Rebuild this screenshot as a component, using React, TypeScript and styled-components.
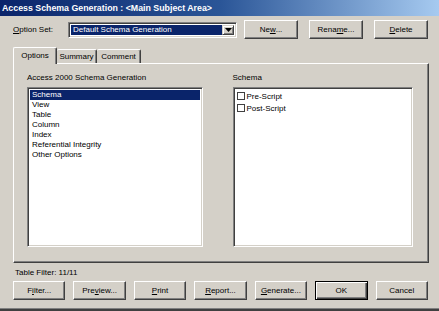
import React from "react";
import styled, { createGlobalStyle } from "styled-components";

const Global = createGlobalStyle`
  html, body { margin: 0; padding: 0; background: #d4d0c8; }
  body { font-family: "Liberation Sans", Arial, sans-serif; font-size: 8px; color: #000; }
  * { box-sizing: border-box; }
`;

const Window = styled.div`
  width: 439px;
  height: 311px;
  background: #d4d0c8;
  display: flex;
  flex-direction: column;
  border-bottom: 2px solid #404040;
  box-shadow: inset 0 -1px 0 #808080;
  overflow: hidden;
`;

const TitleBar = styled.div`
  height: 16px;
  flex: none;
  background: linear-gradient(to right, #0a246a 0%, #2a5597 50%, #a6caf0 100%);
  color: #fff;
  font-weight: bold;
  font-size: 8.8px;
  display: flex;
  align-items: center;
  padding-left: 2px;
  white-space: nowrap;
`;

const TopRow = styled.div`
  display: flex;
  align-items: center;
  margin-top: 4px;
  height: 19px;
  padding: 0 11px 0 13px;
  flex: none;
`;

const Label = styled.span`
  width: 55px;
  flex: none;
  white-space: nowrap;
`;

const U = styled.u`
  text-decoration: underline;
  text-underline-offset: 1px;
`;

const Combo = styled.div`
  width: 169px;
  height: 16px;
  flex: none;
  display: flex;
  background: #fff;
  border: 1px solid;
  border-color: #808080 #fff #fff #808080;
  box-shadow: inset 1px 1px 0 #404040, inset -1px -1px 0 #d4d0c8;
  padding: 2px;
  margin-right: 7px;
`;

const ComboText = styled.div`
  flex: 1;
  background: #0a246a;
  color: #fff;
  display: flex;
  align-items: center;
  padding-left: 2px;
  white-space: nowrap;
  overflow: hidden;
`;

const ComboArrow = styled.div`
  width: 12px;
  flex: none;
  background: #d4d0c8;
  border: 1px solid;
  border-color: #d4d0c8 #404040 #404040 #d4d0c8;
  box-shadow: inset 1px 1px 0 #fff, inset -1px -1px 0 #808080;
  display: flex;
  align-items: center;
  justify-content: center;
`;

const Button = styled.button<{ $w?: number; $default?: boolean }>`
  font: inherit;
  color: #000;
  width: ${(p) => (p.$w ? `${p.$w}px` : "auto")};
  flex: ${(p) => (p.$w ? "none" : "1")};
  height: 19px;
  padding: 0;
  background: #d4d0c8;
  border: 1px solid;
  border-color: ${(p) => (p.$default ? "#000" : "#fff #404040 #404040 #fff")};
  box-shadow: ${(p) =>
    p.$default
      ? "inset 1px 1px 0 #fff, inset -1px -1px 0 #404040, inset -2px -2px 0 #808080"
      : "inset -1px -1px 0 #808080"};
  display: flex;
  align-items: center;
  justify-content: center;
  white-space: nowrap;
`;

const TopButtons = styled.div`
  display: flex;
  gap: 11px;
`;

const Tabs = styled.div`
  margin: 8px 10px 0 13px;
  display: flex;
  flex-direction: column;
  flex: none;
`;

const TabStrip = styled.div`
  display: flex;
  align-items: flex-end;
  height: 16px;
  position: relative;
  z-index: 1;
`;

const Tab = styled.div<{ $active?: boolean; $w: number }>`
  width: ${(p) => p.$w}px;
  height: ${(p) => (p.$active ? 17 : 14)}px;
  margin-bottom: ${(p) => (p.$active ? -1 : 0)}px;
  background: #d4d0c8;
  border-top: 1px solid #fff;
  border-left: ${(p) => (p.$active ? "1px solid #fff" : "0")};
  border-right: 1px solid #404040;
  box-shadow: inset -1px 0 0 #808080;
  border-radius: 2px 2px 0 0;
  display: flex;
  align-items: center;
  justify-content: center;
  padding-bottom: ${(p) => (p.$active ? 2 : 0)}px;
`;

const Panel = styled.div`
  height: 200px;
  border: 1px solid;
  border-color: #fff #404040 #404040 #fff;
  box-shadow: inset -1px -1px 0 #808080;
  display: flex;
  padding: 8px 15px 15px 13px;
  gap: 30px;
`;

const Group = styled.div<{ $w: number }>`
  width: ${(p) => p.$w}px;
  display: flex;
  flex-direction: column;
`;

const GroupLabel = styled.div`
  height: 15px;
  line-height: 11px;
`;

const ListBox = styled.div`
  flex: 1;
  background: #fff;
  border: 1px solid;
  border-color: #808080 #fff #fff #808080;
  box-shadow: inset 1px 1px 0 #404040, inset -1px -1px 0 #d4d0c8;
  padding: 2px;
  display: flex;
  flex-direction: column;
`;

const Row = styled.div<{ $selected?: boolean }>`
  height: 10px;
  line-height: 10px;
  padding-left: 2px;
  background: ${(p) => (p.$selected ? "#0a246a" : "transparent")};
  color: ${(p) => (p.$selected ? "#fff" : "#000")};
  white-space: nowrap;
`;

const CheckRow = styled.div`
  height: 12px;
  display: flex;
  align-items: center;
  gap: 2px;
  padding-left: 1px;
  white-space: nowrap;
`;

const Check = styled.span`
  width: 8px;
  height: 8px;
  flex: none;
  border: 1px solid #404040;
  background: #fff;
`;

const Status = styled.div`
  margin: 5px 0 0 15px;
  height: 10px;
  line-height: 10px;
  flex: none;
`;

const BottomRow = styled.div`
  display: flex;
  gap: 8px;
  margin: 3px 11px 0 13px;
  flex: none;
`;

const Arrow = () => (
  <svg width="7" height="4" viewBox="0 0 7 4">
    <path d="M0 0h7L3.5 4z" fill="#000" />
  </svg>
);

export default function App() {
  const items = [
    "Schema",
    "View",
    "Table",
    "Column",
    "Index",
    "Referential Integrity",
    "Other Options",
  ];
  return (
    <>
      <Global />
      <Window>
        <TitleBar>Access Schema Generation : &lt;Main Subject Area&gt;</TitleBar>
        <TopRow>
          <Label>
            <U>O</U>ption Set:
          </Label>
          <Combo>
            <ComboText>Default Schema Generation</ComboText>
            <ComboArrow>
              <Arrow />
            </ComboArrow>
          </Combo>
          <TopButtons>
            <Button $w={54}>
              Ne<U>w</U>...
            </Button>
            <Button $w={54}>
              Rena<U>m</U>e...
            </Button>
            <Button $w={54}>
              <U>D</U>elete
            </Button>
          </TopButtons>
        </TopRow>
        <Tabs>
          <TabStrip>
            <Tab $active $w={44}>
              Options
            </Tab>
            <Tab $w={40}>Summary</Tab>
            <Tab $w={44}>Comment</Tab>
          </TabStrip>
          <Panel>
            <Group $w={176}>
              <GroupLabel>Access 2000 Schema Generation</GroupLabel>
              <ListBox>
                {items.map((it, i) => (
                  <Row key={it} $selected={i === 0}>
                    {it}
                  </Row>
                ))}
              </ListBox>
            </Group>
            <Group $w={181}>
              <GroupLabel>Schema</GroupLabel>
              <ListBox>
                <CheckRow>
                  <Check />
                  Pre-Script
                </CheckRow>
                <CheckRow>
                  <Check />
                  Post-Script
                </CheckRow>
              </ListBox>
            </Group>
          </Panel>
        </Tabs>
        <Status>Table Filter: 11/11</Status>
        <BottomRow>
          <Button>
            F<U>i</U>lter...
          </Button>
          <Button>
            Pre<U>v</U>iew...
          </Button>
          <Button>
            <U>P</U>rint
          </Button>
          <Button>
            <U>R</U>eport...
          </Button>
          <Button>
            <U>G</U>enerate...
          </Button>
          <Button $default>OK</Button>
          <Button>Cancel</Button>
        </BottomRow>
      </Window>
    </>
  );
}
